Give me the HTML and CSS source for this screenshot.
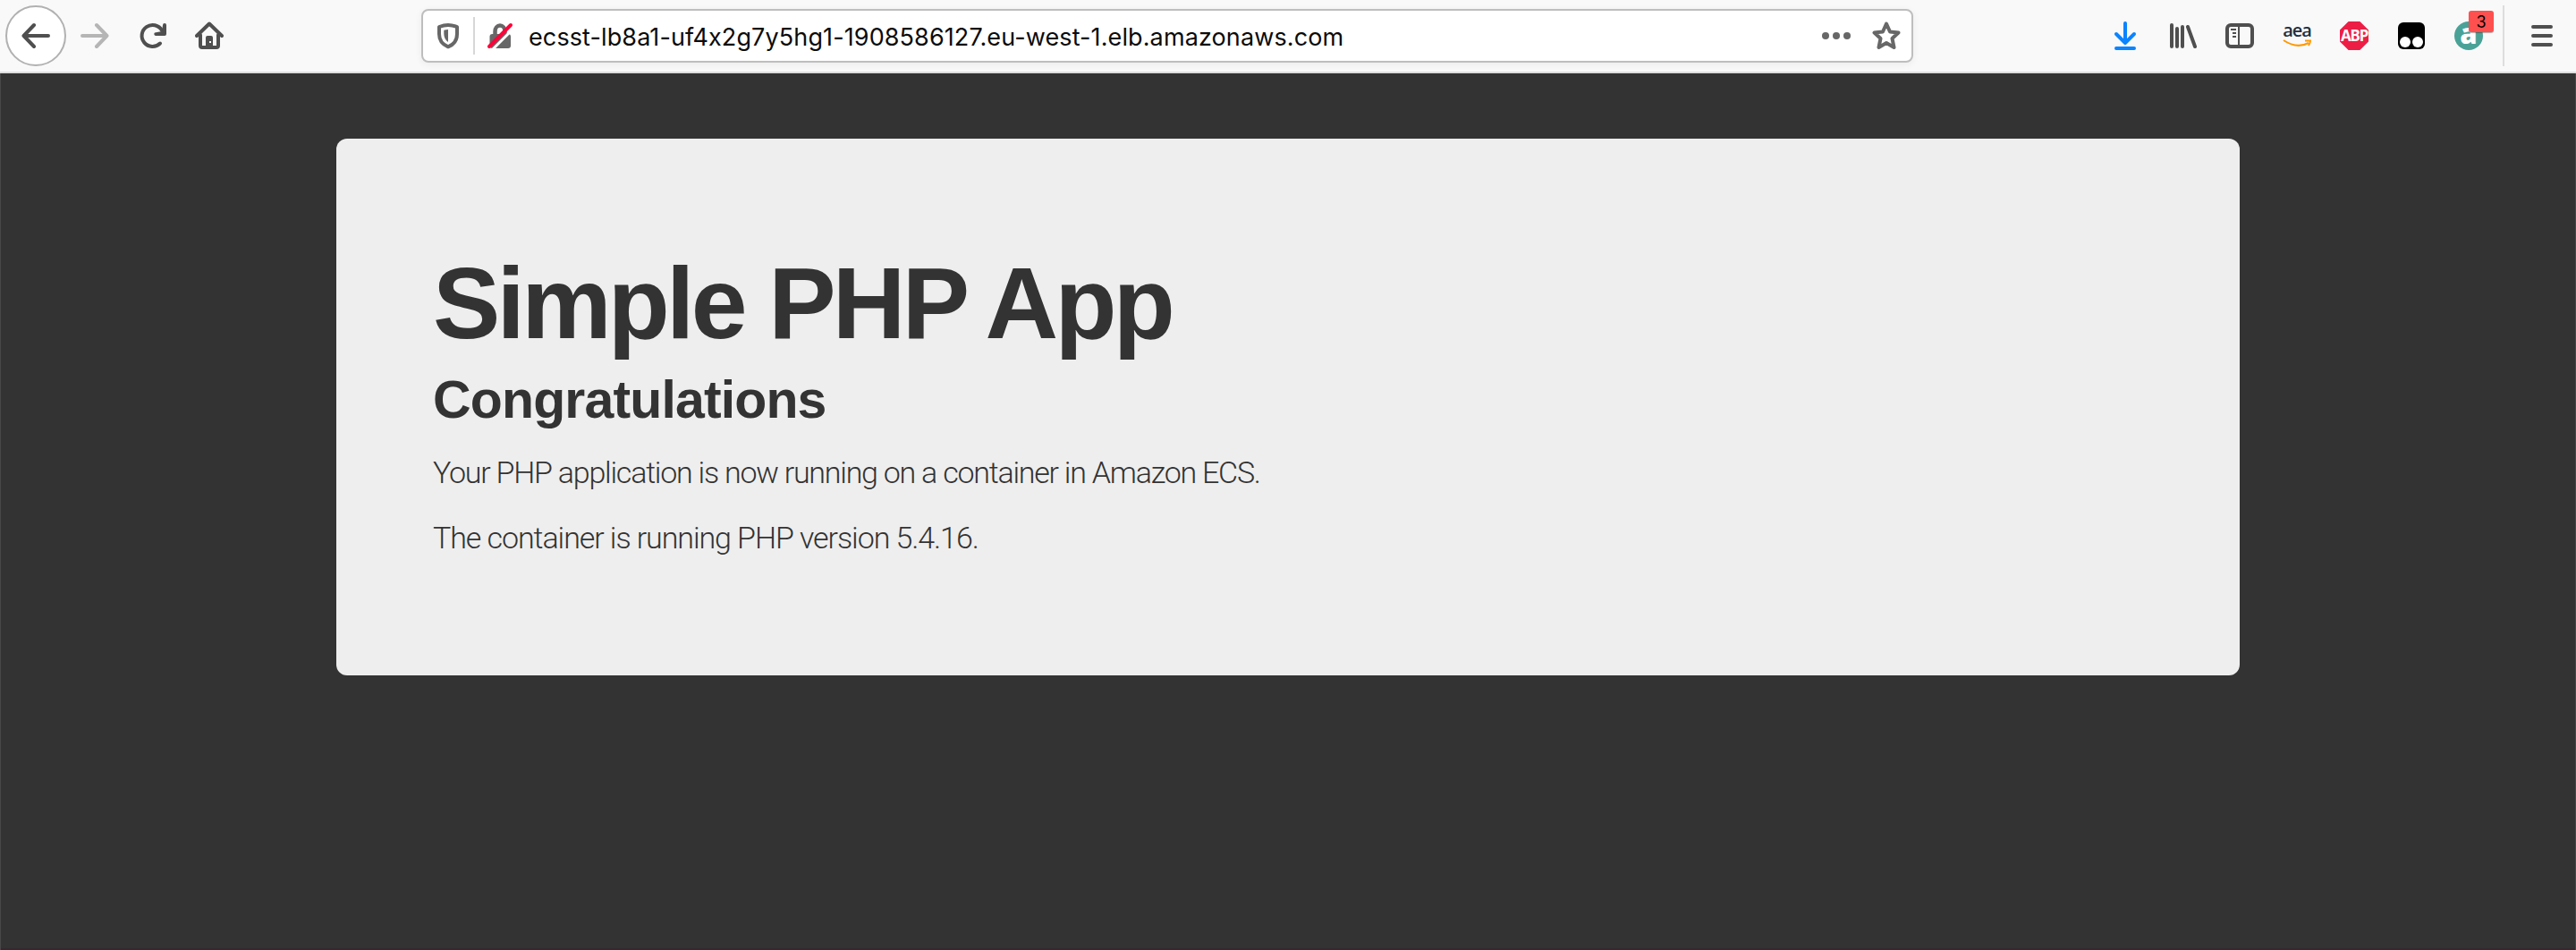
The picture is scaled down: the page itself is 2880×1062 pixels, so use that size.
FILE: index.html
```html
<!DOCTYPE html>
<html lang="en">
<head>
<meta charset="utf-8">
<title>Simple PHP App</title>
<link rel="stylesheet" href="styles.css">
</head>
<body>
<header class="toolbar">
  <nav class="nav">
    <span class="back"><svg class="icon" viewBox="0 0 32 32"><path class="line" d="M30 16H2.500M14 4 2.500 16 14 28"/></svg></span>
    <svg class="icon forward" viewBox="0 0 32 32"><path class="line" d="M2 16H29.500M18 4 29.500 16 18 28"/></svg>
    <svg class="icon reload" viewBox="0 0 32 32"><path class="line" d="M24 24.500A12 12 0 1 1 26 10"/><path class="solid" d="M29 2a2 2 0 0 1 2 2v10a2 2 0 0 1-2 2H19a2 2 0 0 1-1-3.500L26 11l1-7a2 2 0 0 1 2-2z"/></svg>
    <svg class="icon" viewBox="0 0 32 32"><path class="line" d="M2 16 16 2.500 30 16M6 15v12q0 2 2 2h16q2 0 2-2V15"/><path class="solid" fill-rule="evenodd" d="M12 30V18q0-2 2-2h4q2 0 2 2v12zM16 22h2v2h-2z"/></svg>
  </nav>
  <div class="urlbar">
    <svg class="icon muted" viewBox="0 0 32 32"><path class="line" d="M16 4c3 0 6.500 .7 10 2v8c0 6-3 11.500-10 14.300C9 25.500 6 20 6 14V6C9.500 4.700 13 4 16 4z"/><path class="solid" d="M16 9v14c-3-2-4.700-5.500-4.700-9v-4.200Q14 9 16 9z"/></svg>
    <span class="divider"></span>
    <svg class="icon muted lock" viewBox="0 0 32 32"><path class="line" d="M10.500 14v-3a5.500 6.500 0 0 1 11 0v3"/><rect class="solid" x="4.500" y="14" width="23.500" height="16" rx="3"/><path class="gap" d="M7 32 31 8"/><path class="slash" d="M4 28 28 4"/></svg>
    <span class="address">ecsst-lb8a1-uf4x2g7y5hg1-1908586127.eu-west-1.elb.amazonaws.com</span>
    <svg class="icon muted dots" viewBox="0 0 32 32"><circle class="solid" cx="4" cy="16" r="4"/><circle class="solid" cx="16" cy="16" r="4"/><circle class="solid" cx="28" cy="16" r="4"/></svg>
    <svg class="icon muted" viewBox="0 0 32 32"><path class="line" d="M16 2.500 20 11.500 29.500 12.500 22.500 19 24.500 29 16 24 7.500 29 9.500 19 2.500 12.500 12 11.500z"/></svg>
  </div>
  <div class="tools">
    <svg class="icon download" viewBox="0 0 32 32"><path class="line" d="M16 2v22M6 14 16 24 26 14M6 30H26"/></svg>
    <svg class="icon" viewBox="0 0 32 32"><path class="line" d="M4 4v24M10 8v20M16 6v22M22 6 30 28"/></svg>
    <svg class="icon" viewBox="0 0 32 32"><rect class="line" x="2" y="4" width="28" height="24" rx="4"/><path class="thin" d="M15 4v24M6 9h6M8 13h4M8 17h4"/></svg>
    <span class="extension aea">aea<svg class="smile" viewBox="0 0 32 10"><path d="M1 1Q16 11 29 4M25 1.500H31Q31 4 29 7"/></svg></span>
    <span class="extension abp">ABP</span>
    <svg class="icon" viewBox="0 0 32 32"><rect x="1" y="1" width="30" height="30" rx="6"/><circle cx="9" cy="23" r="6" fill="#fff"/><circle cx="23" cy="23" r="6" fill="#fff"/></svg>
    <span class="extension avatar">a<span class="badge">3</span></span>
  </div>
  <span class="separator"></span>
  <svg class="icon" viewBox="0 0 32 32"><path class="line" d="M6 6H26M6 16H26M6 26H26"/></svg>
</header>
<main class="page">
  <section class="hero">
    <h1 class="title">Simple PHP App</h1>
    <h2 class="subtitle">Congratulations</h2>
    <p class="copy lead">Your PHP application is now running on a container in Amazon ECS.</p>
    <p class="copy">The container is running PHP version 5.4.16.</p>
  </section>
</main>
</body>
</html>
```
FILE: styles.css
```css
* { box-sizing: border-box; }

body {
  margin: 0;
  height: 1062px;
  display: flex;
  flex-direction: column;
  background: #333;
}

/* Browser toolbar */
.toolbar {
  height: 82px;
  flex: none;
  display: flex;
  align-items: center;
  padding-left: 6px;
  background: #f9f9fa;
  border-bottom: 2px solid #dedede;
}

.icon { width: 32px; height: 32px; flex: none; display: block; color: #4f4f50; }
.line { fill: none; stroke: currentColor; stroke-width: 4; stroke-linecap: round; stroke-linejoin: round; }
.thin { fill: none; stroke: currentColor; stroke-width: 2; }
.solid { fill: currentColor; }
.muted { color: #676767; }

.nav { display: flex; align-items: center; width: 465px; }
.back {
  width: 68px;
  height: 68px;
  display: grid;
  place-items: center;
  border: 2px solid #b1b1b1;
  border-radius: 50%;
  background: #fff;
}
.forward { margin-left: 16px; color: #b5b5b5; }
.reload { margin: 0 31px 0 33px; }

.urlbar {
  width: 1668px;
  height: 60px;
  display: flex;
  align-items: center;
  padding: 0 12px;
  border: 2px solid #bebebe;
  border-radius: 8px;
  background: #fff;
  box-shadow: 0 2px 8px rgba(0, 0, 0, .06);
}
.divider { width: 2px; height: 42px; margin: 0 12px; background: #d7d7d7; }
.lock .line { stroke-width: 4.500; }
.gap { stroke: #fff; stroke-width: 3; }
.slash { stroke: #ff0039; stroke-width: 4; stroke-linecap: round; }
.address {
  margin: 3px 0 0 16px;
  font: 400 27px/40px Inter, sans-serif;
  font-feature-settings: "calt" 0;
  letter-spacing: .11px;
  color: #0c0c0d;
  white-space: nowrap;
}
.dots { margin: 0 24px 0 auto; }

.tools { display: flex; gap: 32px; margin-left: 221px; }
.download { color: #0a84ff; }
.extension { width: 32px; height: 32px; flex: none; }
.aea { font: 600 20px/20px "Open Sans", sans-serif; letter-spacing: -1px; color: #232f3e; text-align: center; }
.smile { display: block; width: 32px; height: 10px; fill: none; stroke: #f90; stroke-width: 2; }
.abp {
  background: #ed1e45;
  clip-path: polygon(30% 0, 70% 0, 100% 30%, 100% 70%, 70% 100%, 30% 100%, 0 70%, 0 30%);
  color: #fff;
  font: 700 17px/32px "Noto Sans", sans-serif;
  letter-spacing: -1.2px;
  text-align: center;
}
.avatar {
  position: relative;
  border-radius: 50%;
  background: #4aa297;
  color: #fff;
  font: 800 31px/26px "Open Sans", sans-serif;
  text-align: center;
}
.badge {
  position: absolute;
  left: 16px;
  top: -12px;
  width: 28px;
  height: 24px;
  border-radius: 3px;
  background: #ff5050;
  box-shadow: 0 1px 1px rgba(0, 0, 0, .3);
  color: #000;
  font: 400 18px/25px Inter, sans-serif;
}
.separator { width: 2px; height: 68px; margin: 0 26px 0 22px; background: #dedede; }

/* Page content */
.page {
  flex: 1;
  padding: 73px 375px 0;
  border: solid #484848;
  border-width: 0 1px;
  box-shadow: inset 0 -2px #302a2e;
}
.hero {
  height: 600px;
  padding: 124px 108px 0;
  border-radius: 12px;
  background: #eee;
  color: #333;
}
.title, .subtitle, .copy { margin: 0; white-space: nowrap; font-family: "Liberation Sans", Arial, sans-serif; }
.title { font-size: 113px; line-height: 120px; letter-spacing: -3.8px; }
.subtitle { margin-top: 8px; font-size: 59px; line-height: 80px; letter-spacing: -.85px; }
.copy { font: 300 34px/60px Roboto, sans-serif; letter-spacing: -1.08px; margin: 13px 0 0; }
.lead { margin-top: 11px; letter-spacing: -1.24px; }
```
